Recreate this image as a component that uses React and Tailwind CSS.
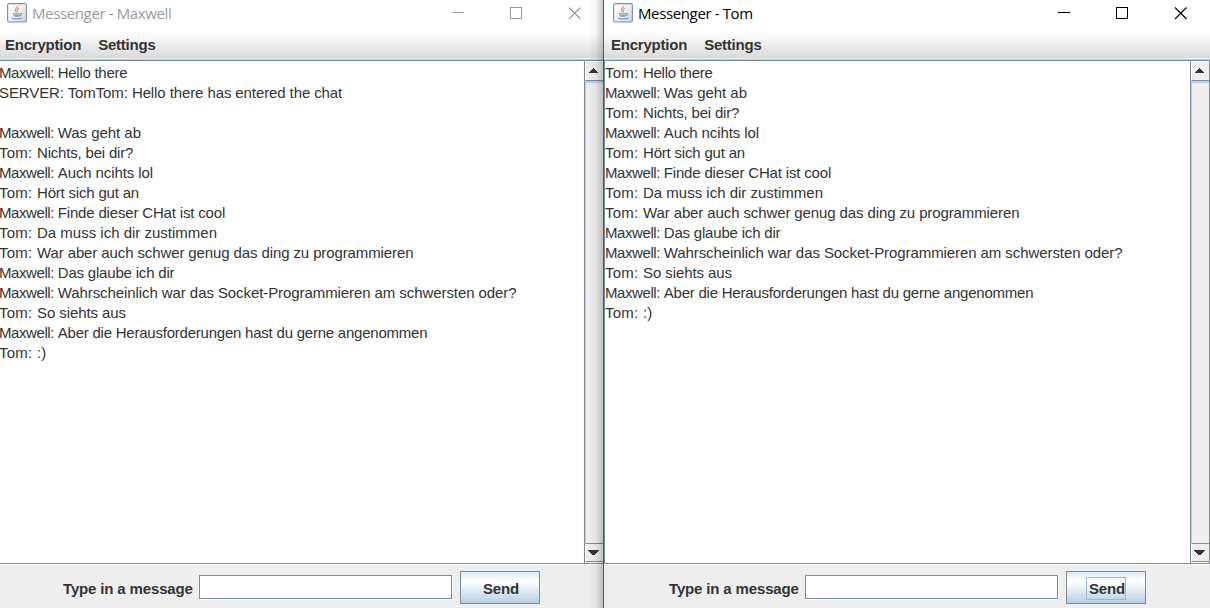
import React from "react";

// Each entry: author, text, letter spacing of the text in pixels.
const SHARED = [
  ["Maxwell", "Was geht ab", -0.04],
  ["Tom", "Nichts, bei dir?", -0.19],
  ["Maxwell", "Auch ncihts lol", -0.1],
  ["Tom", "Hört sich gut an", -0.19],
  ["Maxwell", "Finde dieser CHat ist cool", -0.17],
  ["Tom", "Da muss ich dir zustimmen", 0],
  ["Tom", "War aber auch schwer genug das ding zu programmieren", -0.11],
  ["Maxwell", "Das glaube ich dir", -0.19],
  ["Maxwell", "Wahrscheinlich war das Socket-Programmieren am schwersten oder?", -0.08],
  ["Tom", "So siehts aus", -0.08],
  ["Maxwell", "Aber die Herausforderungen hast du gerne angenommen", -0.225],
  ["Tom", ":)", 0],
];

const MAXWELL_LOG = [
  ["Maxwell", "Hello there", -0.27],
  ["SERVER", "TomTom: Hello there has entered the chat", -0.1],
  null,
  ...SHARED,
];

const TOM_LOG = [["Tom", "Hello there", -0.27], ...SHARED];

const AUTHOR_SPACING = {
  Maxwell: "tracking-[-0.42px]",
  Tom: "tracking-[0.26px]",
  SERVER: "tracking-[-0.1px]",
};

function JavaIcon() {
  return (
    <svg width="20" height="20" viewBox="0 0 20 20" className="shrink-0">
      <defs>
        <linearGradient id="tile" x1="0" y1="0" x2="1" y2="1">
          <stop offset="0" stopColor="#ffffff" />
          <stop offset="0.5" stopColor="#eef0f2" />
          <stop offset="1" stopColor="#c8d0d6" />
        </linearGradient>
      </defs>
      <rect x="0.6" y="0.6" width="18.8" height="18.4" rx="1.6" fill="url(#tile)" stroke="#7890a2" strokeWidth="1.1" />
      <path d="M10.600 3c.6 1.500-2.900 2.500-2.500 4.200.2.800 1.100 1.300 1.400 2M12.100 5.400c-1.600.7-2.300 1.300-1.900 2.100.3.700.6 1 .1 1.800" fill="none" stroke="#ee9450" strokeWidth="1.100" />
      <path d="M5.800 10.200h7.600l-.7 2.600c-.3.700-.8 1-1.400 1H7.900c-.7 0-1.100-.3-1.300-1z" fill="#7f9db4" />
      <path d="M13.200 10.400c2.300-.6 2.400 1.700-.3 2.400M4.700 15c1.600 1.300 8.500 1.300 10.600-.1" fill="none" stroke="#6b8ba5" strokeWidth="1" />
      <path d="M6.600 11.700h5.900" stroke="#dfe7ed" strokeWidth="0.600" />
    </svg>
  );
}

function WindowControls() {
  return (
    <div className="flex items-start gap-[45px]">
      <svg width="13" height="13" shapeRendering="crispEdges" stroke="currentColor" fill="none">
        <path d="M0 5.500h12" />
      </svg>
      <svg width="13" height="13" shapeRendering="crispEdges" stroke="currentColor" fill="none">
        <rect x="0.500" y="0.500" width="11" height="11" />
      </svg>
      <svg width="13" height="13" stroke="currentColor" fill="none" strokeWidth="1.100">
        <path d="M1 .5l11.500 11.500M12.500.5L1 12" />
      </svg>
    </div>
  );
}

function ScrollBar() {
  return (
    <div className="flex w-[20px] shrink-0 flex-col border-x border-[#7a8a99] bg-[#eeeeee]">
      <div className="flex h-[20px] shrink-0 items-start border-b border-l border-t border-b-[#7a8a99] border-l-white border-t-white pl-[3px] pt-[6px]">
        <svg width="9" height="5" shapeRendering="crispEdges" fill="#333333">
          <path d="M4 0h1v1h1v1h1v1h1v1h1v1H0V4h1V3h1V2h1V1h1z" />
        </svg>
      </div>
      <div className="flex-1 border-l border-t-2 border-[#b8cfe5]" />
      <div className="flex h-[19px] shrink-0 items-start border-y border-l border-y-[#7a8a99] border-l-white pl-[2px] pt-[6px]">
        <svg width="11" height="5" shapeRendering="crispEdges" fill="#333333">
          <path d="M0 0h11v1h-1v1H9v1H8v1H7v1H4V4H3V3H2V2H1V1H0z" />
        </svg>
      </div>
      <div className="h-px shrink-0 bg-white" />
    </div>
  );
}

function LogLine({ entry }) {
  if (!entry) return <p className="h-[20px]" />;
  const [author, text, spacing] = entry;
  return (
    <p className="h-[20px]">
      <span className={AUTHOR_SPACING[author]}>{author + ": "}</span>
      <span style={{ letterSpacing: spacing + "px" }}>{text}</span>
    </p>
  );
}

function MessengerWindow({ user, log, active }) {
  return (
    <div className="flex h-full w-[606px] shrink-0 flex-col bg-white">
      <header
        className={
          "flex h-[32px] shrink-0 items-start pl-[9px] pr-[23px] " + (active ? "text-black" : "text-[#999999]")
        }
      >
        <div className="pt-[3px]">
          <JavaIcon />
        </div>
        <h1 className="ml-[5px] flex-1 whitespace-pre pt-[3px] font-['Open_Sans',sans-serif] text-[15px] leading-[20px] tracking-[-0.37px]">
          Messenger - {user}
        </h1>
        <div className="pt-[7px]">
          <WindowControls />
        </div>
      </header>
      <nav className="flex h-[26px] shrink-0 gap-[17px] bg-linear-to-b from-white to-[#dadada] pl-[7px] pt-[3px] text-[15px] font-bold leading-[20px] tracking-[-0.22px] text-[#333333]">
        <span>Encryption</span>
        <span>Settings</span>
      </nav>
      <div className="h-[2px] shrink-0 border-b border-[#cccccc] bg-[#eeeeee]" />
      <main className="flex h-[504px] shrink-0 border-y border-l border-[#7a8a99]">
        <div className="flex-1 whitespace-pre pt-[2px] text-[15px] leading-[20px] text-[#333333]">
          {log.map((entry, i) => (
            <LogLine key={i} entry={entry} />
          ))}
        </div>
        <ScrollBar />
      </main>
      <footer className="flex flex-1 items-start border-t border-white bg-[#eeeeee] pl-[65px] pt-[6px] text-[15px] font-bold text-[#333333]">
        <label className="w-[136px] pt-[8px] leading-[20px] tracking-[-0.15px]">Type in a message</label>
        <div className="mt-[4px] h-[25px] w-[254px] border-b border-r border-white">
          <div className="h-[24px] w-[253px] border border-[#7a8a99] bg-white" />
        </div>
        <button className="ml-[7px] flex h-[33px] w-[80px] items-center justify-center border border-[#7a8a99] bg-linear-to-b from-[#dfe9f3] via-white via-30% to-[#b8cfe5] pt-[2px] leading-[20px]">
          <span
            className={
              "flex h-[23px] w-[40px] items-center border pl-[2px] tracking-[-0.2px] " +
              (active ? "border-[#a3b8cc]" : "border-transparent")
            }
          >
            Send
          </span>
        </button>
      </footer>
    </div>
  );
}

export default function App() {
  return (
    <div className="flex h-[608px] w-[1210px] overflow-hidden bg-white font-['Liberation_Sans',Arial,sans-serif]">
      <section className="relative w-[604px] shrink-0 overflow-hidden">
        <div className="-ml-[2px] h-full">
          <MessengerWindow user="Maxwell" log={MAXWELL_LOG} active={false} />
        </div>
        <div className="absolute inset-y-0 right-0 w-[16px] border-r border-[#555555] bg-linear-to-r from-black/0 via-black/4 to-black/20" />
      </section>
      <section className="w-[606px] shrink-0">
        <MessengerWindow user="Tom" log={TOM_LOG} active />
      </section>
    </div>
  );
}
